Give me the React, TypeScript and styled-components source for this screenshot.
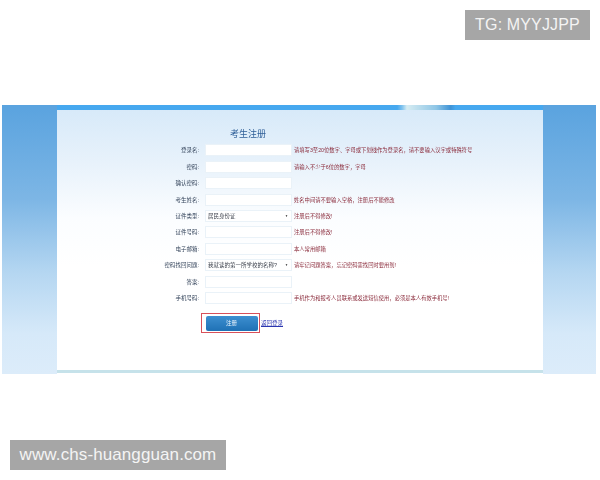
import React from "react";
import styled, { createGlobalStyle } from "styled-components";

const Global = createGlobalStyle`
  html, body { margin: 0; padding: 0; background: #fff; }
  body { font-family: "Liberation Sans", "Noto Sans CJK SC", sans-serif; }
`;

const Page = styled.div`
  width: 600px;
  height: 480px;
  overflow: hidden;
  display: flex;
  flex-direction: column;
  background: #fff;
`;

const TopRow = styled.div`
  height: 95px;
  box-sizing: border-box;
  padding: 10px 10px 0 0;
  display: flex;
  justify-content: flex-end;
  align-items: flex-start;
`;

const BottomRow = styled.div`
  flex: 1;
  box-sizing: border-box;
  padding: 66px 0 0 10px;
  display: flex;
  align-items: flex-start;
`;

const Badge = styled.div<{ $width: number; $size: number; $tracking: number }>`
  width: ${(p) => p.$width}px;
  height: 30px;
  background: #a6a6a6;
  color: #f4f4f4;
  font-family: "Liberation Sans", sans-serif;
  font-size: ${(p) => p.$size}px;
  letter-spacing: ${(p) => p.$tracking}px;
  line-height: 30px;
  text-align: center;
  white-space: nowrap;
`;

const Shot = styled.div`
  width: 594px;
  height: 269px;
  margin: 10px 0 0 2px;
  box-sizing: border-box;
  padding: 0 53px 0 55px;
  display: flex;
  background: linear-gradient(180deg, #5aa3df 0%, #7db6e5 35%, #b4d6f1 62%, #d6e9f9 85%, #dcecfa 100%);
  filter: blur(0.6px);
`;

const Panel = styled.div`
  flex: 1;
  display: flex;
  flex-direction: column;
  background: linear-gradient(180deg, #d6e9f9 0%, #e8f2fb 22%, #fbfdff 42%, #ffffff 60%);
`;

const TopBar = styled.div`
  height: 5px;
  flex: none;
  background: linear-gradient(
    90deg,
    #46a8ef 0%,
    #46a8ef 70%,
    #7fc2ee 71%,
    #d6ecf2 72%,
    #8fc6e6 78%,
    #3f93d6 81%,
    #46a8ef 82%,
    #46a8ef 100%
  );
`;

const Body = styled.div`
  flex: 1;
  display: flex;
  flex-direction: column;
`;

const Title = styled.h1`
  margin: 0;
  padding: 19px 0 0 0;
  width: 382px;
  height: 16px;
  flex: none;
  text-align: center;
  font-size: 9px;
  line-height: 11px;
  font-weight: 400;
  color: #2f5f98;
`;

const FormGrid = styled.div`
  margin-top: -3px;
  display: grid;
  grid-template-columns: 142px 88px 1fr;
  grid-auto-rows: 16.45px;
  column-gap: 0;
  align-items: center;
`;

const Label = styled.div`
  font-size: 5.5px;
  line-height: 8px;
  color: #33435a;
  text-align: right;
  white-space: nowrap;
`;

const FieldCell = styled.div`
  margin-left: 6px;
  width: 87px;
  height: 12px;
  box-sizing: border-box;
  border: 1px solid #eaf2f8;
  background: #fff;
  display: flex;
  align-items: center;
  justify-content: space-between;
  padding: 0 3px 0 2px;
  font-size: 5.5px;
  color: #3a3f4a;
  white-space: nowrap;
`;

const Caret = styled.span`
  font-size: 3px;
  color: #222;
`;

const Hint = styled.div`
  margin-left: 7px;
  font-size: 5.3px;
  line-height: 8px;
  color: #8a2a3a;
  white-space: nowrap;
`;

const Actions = styled.div`
  margin: 7px 0 0 144px;
  display: flex;
  align-items: center;
  gap: 1px;
`;

const RedFrame = styled.div`
  width: 59px;
  height: 20px;
  box-sizing: border-box;
  border: 1px solid #d8505a;
  display: flex;
  align-items: center;
  justify-content: center;
  padding-left: 2px;
`;

const SubmitButton = styled.button`
  width: 52px;
  height: 15px;
  padding: 0;
  border: none;
  border-radius: 2px;
  background: linear-gradient(180deg, #3d8fd0 0%, #1f71b5 100%);
  color: #e8f2fb;
  font-family: inherit;
  font-size: 5.5px;
`;

const BackLink = styled.a`
  font-size: 5.5px;
  color: #2a35b0;
  text-decoration: underline;
  white-space: nowrap;
`;

const BottomStrip = styled.div`
  height: 3px;
  flex: none;
  margin-bottom: 1px;
  background: #c6e2ea;
`;

type Row = { label: string; value?: string; select?: boolean; hint?: string };

const rows: Row[] = [
  { label: "登录名:", hint: "请填写3至20位数字、字母或下划线作为登录名，请不要输入汉字或特殊符号" },
  { label: "密码:", hint: "请输入不少于6位的数字，字母" },
  { label: "确认密码:" },
  { label: "考生姓名:", hint: "姓名中间请不要输入空格，注册后不能修改" },
  { label: "证件类型:", value: "居民身份证", select: true, hint: "注册后不得修改!" },
  { label: "证件号码:", hint: "注册后不得修改!" },
  { label: "电子邮箱:", hint: "本人常用邮箱" },
  { label: "密码找回问题:", value: "我就读的第一所学校的名称?", select: true, hint: "请牢记问题答案，忘记密码需找回时要用到!" },
  { label: "答案:" },
  { label: "手机号码:", hint: "手机作为和报考人员联系或发送短信使用，必须是本人有效手机号!" },
];

export default function App() {
  return (
    <Page>
      <Global />
      <TopRow>
        <Badge $width={125} $size={16} $tracking={0.15}>TG: MYYJJPP</Badge>
      </TopRow>
      <Shot>
        <Panel>
          <TopBar />
          <Body>
            <Title>考生注册</Title>
            <FormGrid>
              {rows.map((r) => (
                <React.Fragment key={r.label}>
                  <Label>{r.label}</Label>
                  <FieldCell>
                    <span>{r.value}</span>
                    {r.select && <Caret>▼</Caret>}
                  </FieldCell>
                  <Hint>{r.hint}</Hint>
                </React.Fragment>
              ))}
            </FormGrid>
            <Actions>
              <RedFrame>
                <SubmitButton>注册</SubmitButton>
              </RedFrame>
              <BackLink>返回登录</BackLink>
            </Actions>
          </Body>
          <BottomStrip />
        </Panel>
      </Shot>
      <BottomRow>
        <Badge $width={216} $size={17} $tracking={0.1}>www.chs-huangguan.com</Badge>
      </BottomRow>
    </Page>
  );
}
